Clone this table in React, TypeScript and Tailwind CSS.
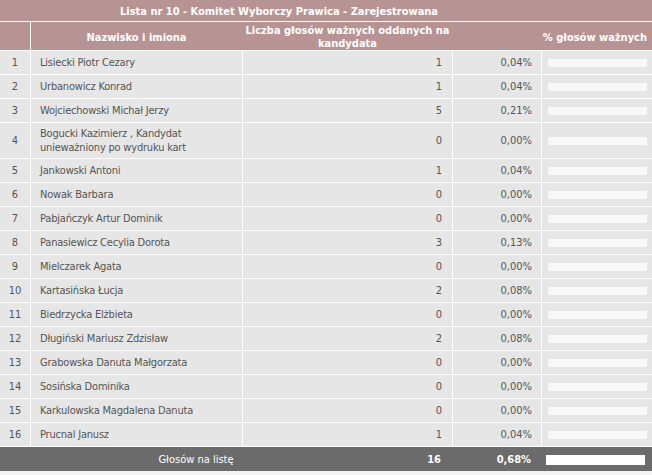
import React from "react";

const rows: [number, React.ReactNode, number, string][] = [
  [1, "Lisiecki Piotr Cezary", 1, "0,04%"],
  [2, "Urbanowicz Konrad", 1, "0,04%"],
  [3, "Wojciechowski Michał Jerzy", 5, "0,21%"],
  [
    4,
    <>
      Bogucki Kazimierz , Kandydat
      <br />
      unieważniony po wydruku kart
    </>,
    0,
    "0,00%",
  ],
  [5, "Jankowski Antoni", 1, "0,04%"],
  [6, "Nowak Barbara", 0, "0,00%"],
  [7, "Pabjańczyk Artur Dominik", 0, "0,00%"],
  [8, "Panasiewicz Cecylia Dorota", 3, "0,13%"],
  [9, "Mielczarek Agata", 0, "0,00%"],
  [10, "Kartasińska Łucja", 2, "0,08%"],
  [11, "Biedrzycka Elżbieta", 0, "0,00%"],
  [12, "Długiński Mariusz Zdzisław", 2, "0,08%"],
  [13, "Grabowska Danuta Małgorzata", 0, "0,00%"],
  [14, "Sosińska Dominika", 0, "0,00%"],
  [15, "Karkulowska Magdalena Danuta", 0, "0,00%"],
  [16, "Prucnal Janusz", 1, "0,04%"],
];

export default function App() {
  return (
    <div
      className="w-[652px] h-[475px] bg-[#f4f4f4] text-[11px] leading-[14px] overflow-hidden"
      style={{ fontFamily: '"DejaVu Sans Condensed", "DejaVu Sans", sans-serif' }}
    >
      <div className="grid grid-cols-[30px_211px_209px_88px_110px] gap-px bg-white">
        <div className="col-span-5 h-[21px] bg-[#b89393] text-white font-bold flex items-center justify-center pr-[94px] pt-[3px]">
          Lista nr 10 - Komitet Wyborczy Prawica - Zarejestrowana
        </div>
        <div className="h-[28px] bg-[#b89393]" />
        <div className="bg-[#b89393] text-white font-bold flex items-center justify-center pt-[3px]">
          Nazwisko i imiona
        </div>
        <div className="bg-[#b89393] text-white font-bold flex items-center justify-center text-center leading-[13px] -mx-[2px] whitespace-nowrap pt-[2px]">
          <span>
            Liczba głosów ważnych oddanych na
            <br />
            kandydata
          </span>
        </div>
        <div className="col-span-2 bg-[#b89393] text-white font-bold flex items-center justify-end pr-[5px] pt-[3px]">
          % głosów ważnych
        </div>
        {rows.map(([n, name, v, p]) => (
          <React.Fragment key={n}>
            <div
              className={`bg-[#e6e6e6] text-[#555] flex items-center justify-center pt-px ${
                n === 4 ? "h-[35px]" : "h-[23px]"
              }`}
            >
              {n}
            </div>
            <div className="bg-[#e6e6e6] text-[#555] flex items-center pl-[9px] pt-px whitespace-nowrap tracking-[-0.2px]">
              <span>{name}</span>
            </div>
            <div className="bg-[#e6e6e6] text-[#555] flex items-center justify-end pr-[10px] pt-px">{v}</div>
            <div className="bg-[#e6e6e6] text-[#555] flex items-center justify-end pr-[9px] pt-px">{p}</div>
            <div className="bg-[#e6e6e6] flex items-center pl-[6px]">
              <div className="w-[99px] h-[8px] bg-[#f8f8f8] rounded-[1px] blur-[0.6px]" />
            </div>
          </React.Fragment>
        ))}
      </div>
      <div className="h-px bg-white" />
      <div className="h-[24px] bg-[#6b6b6b] text-white grid grid-cols-[392px_59px_89px_112px] items-center pt-px">
        <div className="text-center">Głosów na listę</div>
        <div className="text-right pr-[10px] font-bold">16</div>
        <div className="text-right pr-[9px] font-bold">0,68%</div>
        <div className="pl-[6px]">
          <div className="w-[99px] h-[10px] bg-white" />
        </div>
      </div>
    </div>
  );
}
